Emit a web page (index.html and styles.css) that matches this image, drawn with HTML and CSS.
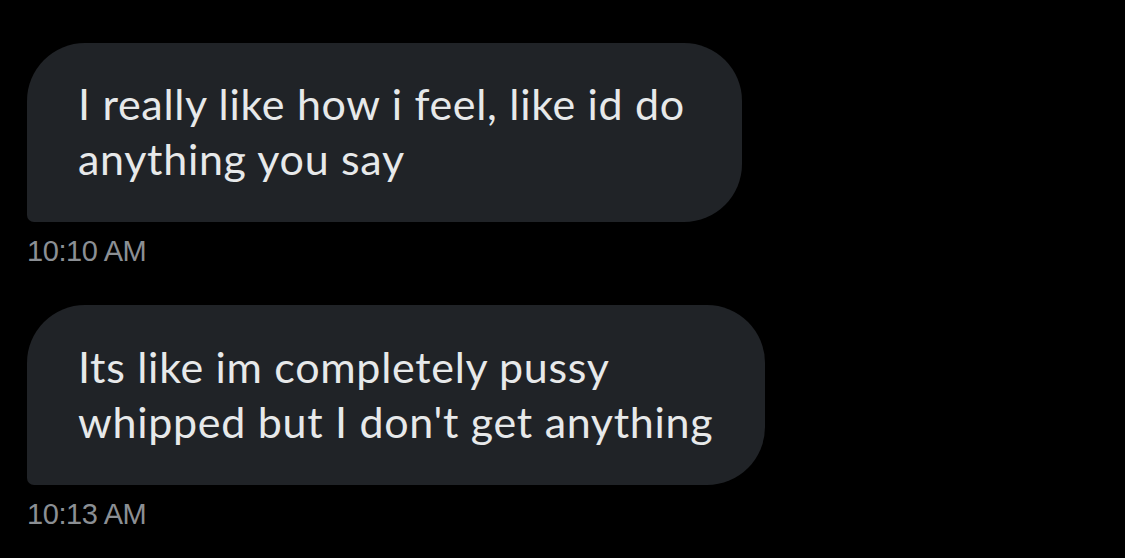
FILE: index.html
```html
<!DOCTYPE html>
<html>
<head>
<meta charset="utf-8">
<link rel="stylesheet" href="styles.css">
</head>
<body>
<main class="thread">
  <div class="msg">
    <div class="bubble">I really like how i feel, like id do<br>anything you say</div>
    <div class="time">10:10 AM</div>
  </div>
  <div class="msg msg-second">
    <div class="bubble">Its like im completely pussy<br>whipped but I don't get anything</div>
    <div class="time">10:13 AM</div>
  </div>
</main>
</body>
</html>
```
FILE: styles.css
```css
html, body {
  margin: 0;
  padding: 0;
  background: #000;
}
.thread {
  display: flex;
  flex-direction: column;
  align-items: flex-start;
  gap: 37px;
  padding: 43px 0 0 27px;
}
.msg {
  display: flex;
  flex-direction: column;
  align-items: flex-start;
  gap: 12px;
}
.bubble {
  background: #202327;
  color: #e7e9ea;
  font-family: Lato, "Open Sans", sans-serif;
  font-size: 43px;
  letter-spacing: 0.7px;
  line-height: 55px;
  padding: 33px 57px 36px 51px;
  border-radius: 58px 58px 58px 7px;
  white-space: nowrap;
}
.msg-second .bubble {
  padding-top: 34px;
  padding-bottom: 36px;
  padding-right: 52px;
}
.time {
  font-family: "Liberation Sans", Arial, sans-serif;
  font-size: 29px;
  line-height: 34px;
  color: #8b8f94;
  letter-spacing: -0.4px;
}
```
